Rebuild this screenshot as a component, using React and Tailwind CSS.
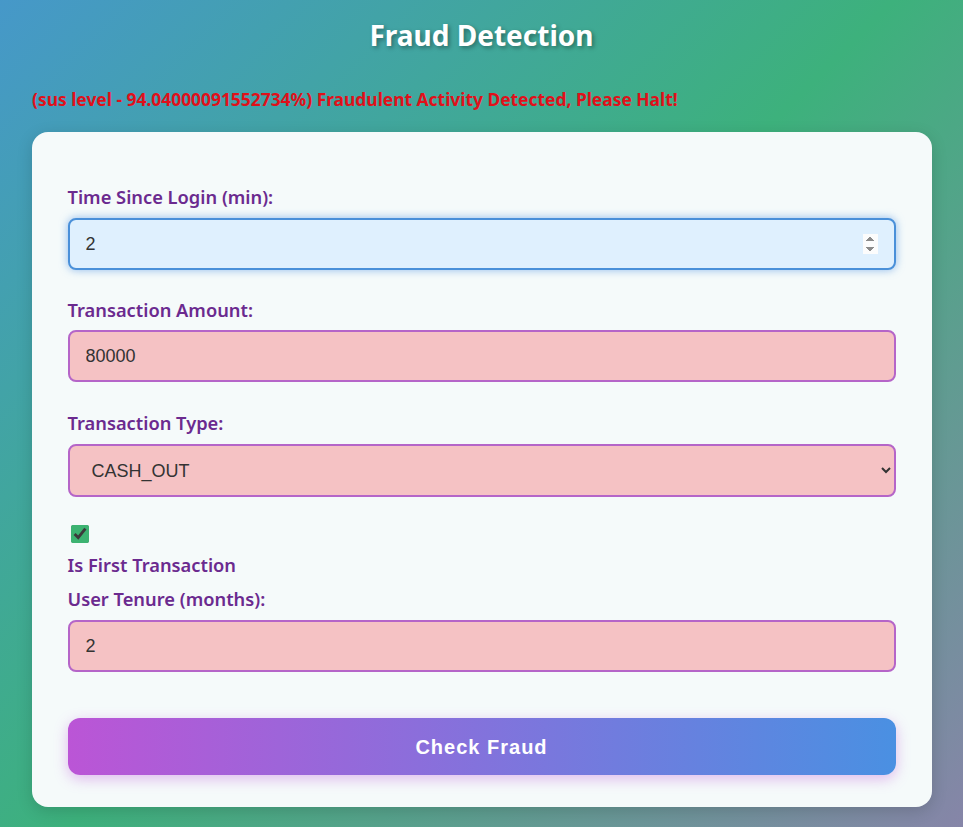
import { useState } from "react";

const FIELD =
  "h-[52px] w-full rounded-lg border-2 border-[#b565c8] bg-[#f5c2c4] px-4 font-['Liberation_Sans',Arial,sans-serif] text-[18px] text-[#333] outline-none focus:border-[#4a90d9] focus:bg-[#dff0fe] focus:shadow-[0_0_8px_rgba(74,144,226,0.6)]";

const LABEL = "block font-['Noto_Sans',sans-serif] text-[18.3px] font-semibold leading-6 text-[#6b2a8f]";

export default function App() {
  const [login, setLogin] = useState("2");
  const [amount, setAmount] = useState("80000");
  const [type, setType] = useState("CASH_OUT");
  const [first, setFirst] = useState(true);
  const [tenure, setTenure] = useState("2");

  return (
    <div className="min-h-[827px] bg-[linear-gradient(135deg,#4698c9_0%,#3db17c_50%,#8685a8_100%)] px-[31px] pb-5 pt-[17px]">
      <h1 className="text-center font-['Noto_Sans',sans-serif] text-[28px] font-bold leading-9 text-white [text-shadow:2px_2px_4px_rgba(0,0,0,0.35)]">
        Fraud Detection
      </h1>

      <p className="mt-[34px] pl-px font-['Noto_Sans',sans-serif] text-[17.4px] font-bold leading-6 text-[#e0101a]">
        (sus level - 94.04000091552734%) Fraudulent Activity Detected, Please Halt!
      </p>

      <form
        onSubmit={(e) => e.preventDefault()}
        className="mx-auto mt-[21px] max-w-[900px] rounded-2xl bg-[#f5fafa] px-9 pb-8 pt-[53px] shadow-[0_4px_16px_rgba(0,0,0,0.15)]"
      >
        <label className={LABEL}>Time Since Login (min):</label>
        <input
          autoFocus
          type="number"
          value={login}
          onChange={(e) => setLogin(e.target.value)}
          className={`${FIELD} mt-[9px]`}
        />

        <label className={`${LABEL} mt-7`}>Transaction Amount:</label>
        <input
          type="number"
          value={amount}
          onChange={(e) => setAmount(e.target.value)}
          className={`${FIELD} mt-2`}
        />

        <label className={`${LABEL} mt-[29px]`}>Transaction Type:</label>
        <select
          value={type}
          onChange={(e) => setType(e.target.value)}
          className={`${FIELD} mt-[9px] h-[53px] pl-[18px]`}
        >
          <option>CASH_OUT</option>
          <option>PAYMENT</option>
          <option>TRANSFER</option>
          <option>DEBIT</option>
          <option>CASH_IN</option>
        </select>

        <input
          type="checkbox"
          checked={first}
          onChange={(e) => setFirst(e.target.checked)}
          className="ml-[3px] mt-7 block h-[18px] w-[18px] accent-[#3cb371]"
        />
        <label className={`${LABEL} mt-[10px]`}>Is First Transaction</label>

        <label className={`${LABEL} mt-[10px]`}>User Tenure (months):</label>
        <input
          type="number"
          value={tenure}
          onChange={(e) => setTenure(e.target.value)}
          className={`${FIELD} mt-[9px]`}
        />

        <button
          type="submit"
          className="mt-[46px] h-[57px] w-full rounded-xl bg-[linear-gradient(90deg,#bb55d6,#4a90e2)] font-['Liberation_Sans',Arial,sans-serif] text-[20px] font-bold tracking-[1px] text-white shadow-[0_4px_14px_rgba(190,90,220,0.4)]"
        >
          Check Fraud
        </button>
      </form>
    </div>
  );
}
